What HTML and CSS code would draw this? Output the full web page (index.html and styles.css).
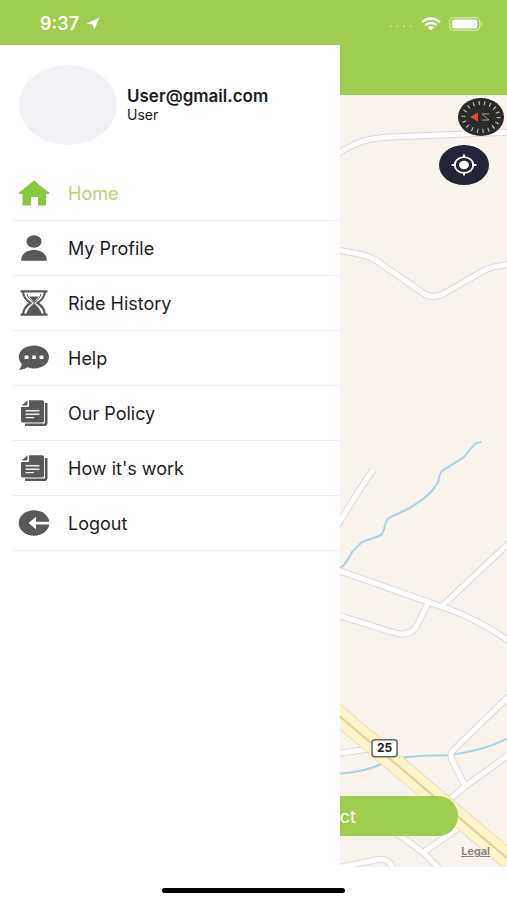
FILE: index.html
```html
<!DOCTYPE html>
<html lang="en">
<head>
<meta charset="utf-8">
<meta name="viewport" content="width=device-width, initial-scale=1">
<title>Home</title>
<link rel="stylesheet" href="styles.css">
</head>
<body>
<header class="status">
  <span class="clock">9:37
    <svg width="14" height="13" viewBox="0 0 14 13"><path d="M13.500 .5 8.500 12.500 6.500 7.500 .3 6.500z" fill="currentColor"/></svg>
  </span>
  <span class="signals">
    <svg width="24" height="6" viewBox="0 0 24 6" fill="#c6e396"><circle cx="2" cy="5" r="1"/><circle cx="8.500" cy="5" r="1"/><circle cx="15" cy="5" r="1"/><circle cx="21.500" cy="5" r="1"/></svg>
    <svg width="20" height="14" viewBox="0 0 20 14"><g fill="none" stroke="currentColor" stroke-width="2.400"><path d="M1 5Q10-2 19 5"/><path d="M4.300 8.300Q10 3.800 15.700 8.300"/></g><path d="M6.800 10.200Q10 7.800 13.200 10.200L10 13.500z" fill="currentColor"/></svg>
    <svg width="34" height="14" viewBox="0 0 34 14"><rect x=".7" y=".7" width="30" height="12.600" rx="4" fill="none" stroke="#d3eaae" stroke-width="1.200"/><rect x="3" y="2.500" width="25.500" height="9" rx="2.500" fill="currentColor"/><path d="M32 4.500Q34.500 7 32 9.500z" fill="#d3eaae"/></svg>
  </span>
</header>
<main class="stage">
  <aside class="drawer">
    <div class="account">
      <div class="avatar"></div>
      <div>
        <div class="email">User@gmail.com</div>
        <div class="role">User</div>
      </div>
    </div>
    <nav class="menu">
      <a class="item active" href="#"><svg class="icon" viewBox="0 0 32 28"><path d="M16 1.500 31 13.500Q32 15 30 15H28V25.500Q28 26.500 27 26.500H20V18H13V26.500H5.500Q4.500 26.500 4.500 25.500V15H2Q0 15 1 13.500z" fill="currentColor"/></svg>Home</a>
      <a class="item" href="#"><svg class="icon" viewBox="0 0 32 28"><ellipse cx="16" cy="7.500" rx="7.500" ry="6.200" fill="currentColor"/><path d="M3.300 26.800V25C4 19.500 9 16 16 16S28 19.500 28.700 25V26.800z" fill="currentColor"/></svg>My Profile</a>
      <a class="item" href="#"><svg class="icon" viewBox="0 0 32 28"><g fill="none" stroke="currentColor"><path d="M2.500 2.400H29.500M2.500 25.600H29.500" stroke-width="2.200"/><path d="M5 3C5.500 8 8 11 12.500 14 8 17 5.500 20 5 25M27 3C26.500 8 24 11 19.500 14 24 17 26.500 20 27 25" stroke-width="2.200"/><path d="M9 5C10 8.500 12 11 16 13.500 20 11 22 8.500 23 5M9 24Q11 18 16 14.500 21 18 23 24" stroke-width="1"/></g><path d="M11 7.500H21L16 13zM16 15Q20.500 18 23.500 25H8.500Q11.500 18 16 15z" fill="currentColor"/></svg>Ride History</a>
      <a class="item" href="#"><svg class="icon" viewBox="0 0 32 28"><path d="M16 1.500C24.500 1.500 31 6.500 31 13S24.500 24.500 16 24.500Q12.500 24.500 9.500 23.300 6 26 1 26 3.500 23.500 3.800 20 .7 17 .7 13C.7 6.500 7.500 1.500 16 1.500z" fill="currentColor"/><g fill="#fff"><rect x="6.500" y="11.500" width="4" height="3.500" rx="1"/><rect x="14" y="11.500" width="4" height="3.500" rx="1"/><rect x="21.500" y="11.500" width="4" height="3.500" rx="1"/></g></svg>Help</a>
      <a class="item" href="#"><svg class="icon" viewBox="0 0 32 28"><path d="M11 1.300H24Q26 1.300 26 2.800V22Q26 23.500 24 23.500H5Q3 23.500 3 22V8H9.500Q11 8 11 6.500z" fill="currentColor"/><path d="M3.500 6.500 9.500 1.500V5.500Q9.500 6.500 8.500 6.500z" fill="currentColor"/><path d="M28.200 4V24Q28.200 25.800 26 25.800H7" fill="none" stroke="currentColor" stroke-width="2.600"/><path d="M7.500 11.800H21.500M7.500 15.200H21.500M7.500 18.600H16" stroke="#eee" stroke-width="1.400"/></svg>Our Policy</a>
      <a class="item" href="#"><svg class="icon" viewBox="0 0 32 28"><path d="M11 1.300H24Q26 1.300 26 2.800V22Q26 23.500 24 23.500H5Q3 23.500 3 22V8H9.500Q11 8 11 6.500z" fill="currentColor"/><path d="M3.500 6.500 9.500 1.500V5.500Q9.500 6.500 8.500 6.500z" fill="currentColor"/><path d="M28.200 4V24Q28.200 25.800 26 25.800H7" fill="none" stroke="currentColor" stroke-width="2.600"/><path d="M7.500 11.800H21.500M7.500 15.200H21.500M7.500 18.600H16" stroke="#eee" stroke-width="1.400"/></svg>How it's work</a>
      <a class="item" href="#"><svg class="icon" viewBox="0 0 32 28"><ellipse cx="16" cy="14" rx="15.300" ry="12.700" fill="currentColor"/><path d="M10.500 14 18 7.800V12.700H32V15.500H18V20.200z" fill="#fff"/></svg>Logout</a>
    </nav>
  </aside>
  <section class="page">
    <div class="titlebar"></div>
    <div class="map">
      <svg class="tiles" viewBox="340 95 167 771" preserveAspectRatio="xMinYMin slice">
        <defs>
          <g id="roads">
            <path d="M334 156Q353 143 367 140 380 137 415 136L512 132"/>
            <path d="M334 249 360 254Q370 256 379 262L422 292Q433 300 446 292L482 271Q494 265 512 264"/>
            <path d="M334 530 357 493 373 469"/>
            <path d="M334 568 442 606Q462 612 490 628L512 642"/>
            <path d="M442 605 512 539"/>
            <path d="M334 613 392 631Q408 637 416 626L428 602"/>
            <path d="M334 753 373 747"/>
            <path d="M512 692 454 748Q449 752 452 759L465 785"/>
            <path d="M512 751 465 785 446 801"/>
            <path d="M465 822 423 851"/>
            <path d="M393 829 423 851 444 872"/>
            <path d="M334 867 378 858Q390 856 394 870"/>
          </g>
        </defs>
        <g fill="none" stroke="#a5d5e5" stroke-width="2" stroke-linejoin="round"><path d="M339 568Q346 564 352 551L362 541 377 536Q383 534 384 528 386 519 389 517L410 507Q421 500 428 494 439 483 439 476 440 471 444 469L463 457 475 443 481 441"/><path d="M334 773Q365 771 383 762 397 754 447 754 485 750 512 735"/></g>
        <use href="#roads" fill="none" stroke="#dcd9d4" stroke-width="7"/>
        <use href="#roads" fill="none" stroke="#fff" stroke-width="5"/>
        <g fill="none"><path d="M330 707 520 868" stroke="#eadcb8" stroke-width="20"/><path d="M330 707 520 868" stroke="#fdf5c9" stroke-width="18"/><path d="M330 707 520 868" stroke="#e5cf9c" stroke-width="2"/></g>
        <rect x="372" y="738.500" width="25" height="17" rx="3" fill="#fff" stroke="#666" stroke-width="1.500"/>
        <text class="route" x="384.500" y="751" text-anchor="middle">25</text>
      </svg>
      <div class="controls">
        <button class="round compass" aria-label="Compass"><svg width="46" height="38" viewBox="0 0 46 38"><ellipse cx="23" cy="19" rx="17.500" ry="14" fill="none" stroke="#b9b9b5" stroke-width="4" stroke-dasharray="1.200 4.300"/><path d="M12 19 20 14.500V23.500z" fill="#ef4136"/><path d="M31 16H24L31 22H24" fill="none" stroke="#999" stroke-width="1"/></svg></button>
        <button class="round locate" aria-label="My location"><svg width="26" height="22" viewBox="0 0 26 22"><ellipse cx="13" cy="11" rx="9.300" ry="7.900" fill="none" stroke="#fff" stroke-width="1.800"/><ellipse cx="13" cy="11" rx="5" ry="4.200" fill="#fff"/><path d="M13 .5V4M13 18V21.500M.5 11H5M21 11H25.500" stroke="#fff" stroke-width="2"/></svg></button>
      </div>
      <div class="bottom">
        <button class="cta">ct</button>
        <a class="legal" href="#">Legal</a>
      </div>
    </div>
  </section>
</main>
<footer class="home-area"><div class="home-bar"></div></footer>
</body>
</html>
```
FILE: styles.css
```css
* { box-sizing: border-box; }
body {
  margin: 0;
  min-height: 100vh;
  display: flex;
  flex-direction: column;
  background: #fff;
  color: #1c1c1e;
  font-family: Inter, "Liberation Sans", sans-serif;
}
button { border: 0; padding: 0; font: inherit; }
a { color: inherit; text-decoration: none; }
.status {
  height: 45px;
  padding: 2px 24px 0 40px;
  display: flex;
  align-items: center;
  justify-content: space-between;
  background: #9fcd50;
  color: #fff;
}
.clock { display: flex; align-items: center; gap: 7px; font-size: 18px; font-weight: 600; }
.signals { display: flex; align-items: center; gap: 8px; }
.stage { flex: 1; display: grid; grid-template-columns: 67fr 33fr; }
.drawer { background: #fff; }
.account { display: flex; align-items: center; gap: 10px; padding: 20px 0 21px 19px; }
.avatar { width: 98px; height: 80px; border-radius: 50%; background: #f2f1f6; }
.email { font-size: 17px; line-height: 20px; font-weight: 600; }
.role { font-size: 14px; line-height: 18px; }
.menu { margin-left: 12px; }
.item {
  height: 55px;
  padding-left: 6px;
  display: flex;
  align-items: center;
  gap: 18px;
  border-bottom: 1px solid #f1eff1;
  font-size: 18px;
}
.icon { width: 32px; height: 28px; color: #59595a; }
.active { color: #b1d66f; }
.active .icon { color: #86c93c; }
.page { display: flex; flex-direction: column; min-width: 0; }
.titlebar { height: 50px; background: #9fcd50; }
.map { flex: 1; display: grid; background: #f8f4ed; overflow: hidden; }
.map > * { grid-area: 1 / 1; }
.tiles { width: 100%; height: 100%; min-height: 0; }
.route { font-size: 12px; font-weight: 700; fill: #222; }
.controls {
  padding: 3px 3px 0 0;
  display: flex;
  flex-direction: column;
  align-items: flex-end;
  gap: 9px;
  align-self: start;
}
.round { display: grid; place-items: center; border-radius: 50%; }
.compass { width: 46px; height: 38px; background: #2b2b29; }
.locate { width: 50px; height: 40px; margin-right: 15px; background: #222538; }
.bottom { align-self: end; display: flex; flex-direction: column; padding-bottom: 9px; gap: 8px; }
.cta {
  height: 40px;
  margin-right: 49px;
  border-radius: 0 20px 20px 0;
  background: #9fcd50;
  color: #fff;
  font-size: 18px;
  text-align: left;
}
.legal {
  align-self: flex-end;
  margin-right: 17px;
  color: #858078;
  font-size: 11px;
  line-height: 14px;
  font-weight: 600;
  text-decoration: underline;
}
.home-area { height: 34px; display: flex; justify-content: center; align-items: flex-end; padding-bottom: 8px; }
.home-bar { width: 36%; height: 5px; border-radius: 3px; background: #000; }
```
